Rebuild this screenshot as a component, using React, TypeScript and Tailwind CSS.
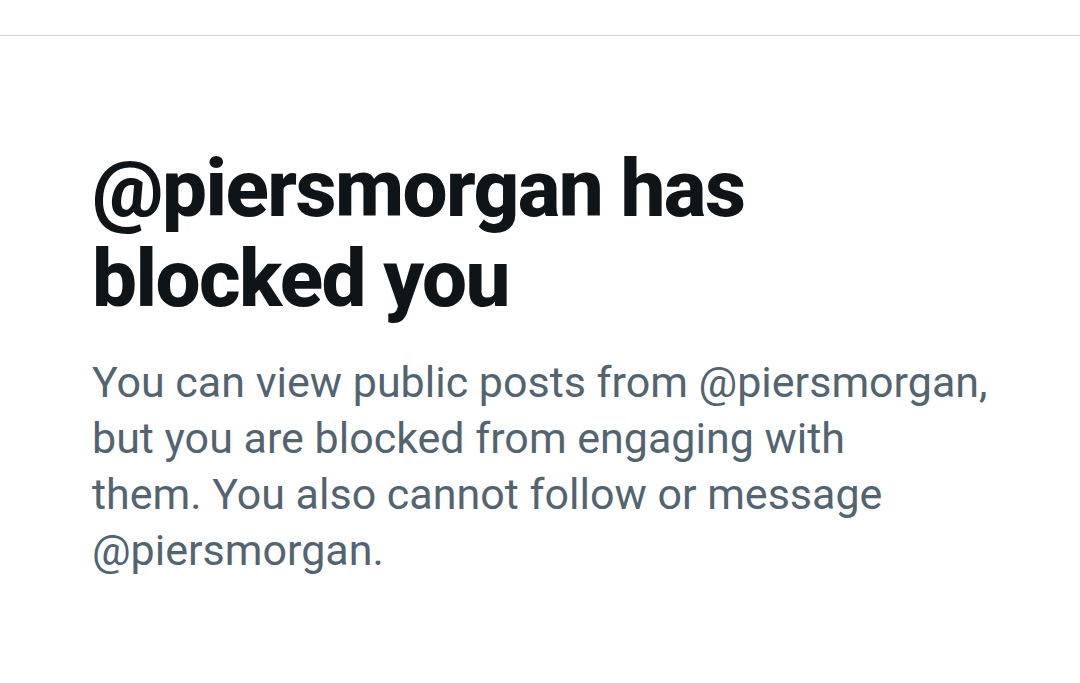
import React from "react";

export default function App() {
  return (
    <div className="w-[1080px] h-[683px] bg-white overflow-hidden">
      <div className="h-[35px]" />
      <div className="h-px bg-[#cfd9de]" />
      <div className="pl-[92px] pr-[60px] pt-[108px]">
        <h1
          className="text-[80px] leading-[90px] font-extrabold text-[#0f1419] tracking-[-1.6px]"
          style={{ fontFamily: "Roboto, 'Noto Sans', sans-serif" }}
        >
          @piersmorgan has
          <br />
          blocked you
        </h1>
        <p
          className="mt-[30px] text-[43px] leading-[56px] text-[#536471] w-[980px]"
          style={{ fontFamily: "Roboto, 'Noto Sans', sans-serif" }}
        >
          You can view public posts from @piersmorgan,
          <br />
          but you are blocked from engaging with
          <br />
          them. You also cannot follow or message
          <br />
          @piersmorgan.
        </p>
      </div>
    </div>
  );
}
